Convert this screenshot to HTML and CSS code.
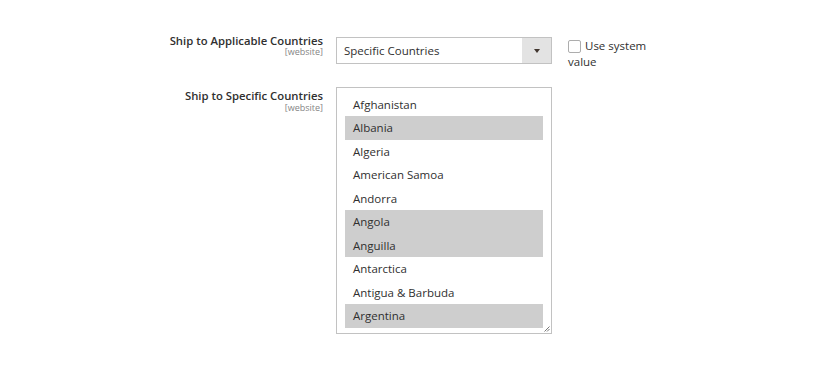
FILE: index.html
```html
<!DOCTYPE html>
<html>
<head>
<meta charset="utf-8">
<link rel="stylesheet" href="styles.css">
</head>
<body>
<div class="form">
  <div class="row row-first">
    <div class="label">
      <span class="label-text">Ship to Applicable Countries</span>
      <span class="scope">[website]</span>
    </div>
    <div class="control">
      <div class="select">
        <span class="select-value">Specific Countries</span>
        <span class="select-arrow"><span class="tri"></span></span>
      </div>
    </div>
    <div class="use-default">
      <span class="checkbox"></span>Use system value
    </div>
  </div>
  <div class="row row-second">
    <div class="label label-second">
      <span class="label-text">Ship to Specific Countries</span>
      <span class="scope">[website]</span>
    </div>
    <div class="control">
      <div class="multiselect">
        <div class="option">Afghanistan</div>
        <div class="option selected">Albania</div>
        <div class="option">Algeria</div>
        <div class="option">American Samoa</div>
        <div class="option">Andorra</div>
        <div class="option selected">Angola</div>
        <div class="option selected">Anguilla</div>
        <div class="option">Antarctica</div>
        <div class="option">Antigua &amp; Barbuda</div>
        <div class="option selected">Argentina</div>
        <svg class="grip" width="6" height="6" viewBox="0 0 6 6"><path d="M5.5 0.5 L0.5 5.5 M5.5 3 L3 5.5" stroke="#777" stroke-width="1" fill="none"/></svg>
      </div>
    </div>
  </div>
</div>
</body>
</html>
```
FILE: styles.css
```css
html, body {
  margin: 0;
  padding: 0;
  background: #ffffff;
}
body {
  font-family: "Open Sans", "Liberation Sans", sans-serif;
  color: #303030;
  width: 837px;
  height: 366px;
  overflow: hidden;
}
.form {
  padding-top: 34px;
}
.row {
  display: flex;
  align-items: flex-start;
}
.row-second {
  margin-top: 17px;
}
.label {
  width: 323px;
  text-align: right;
  display: flex;
  flex-direction: column;
  align-items: flex-end;
}
.label-second {
  margin-top: 2px;
}
.label-second .scope {
  margin-top: 1px;
}
.label-text {
  font-size: 11.3px;
  font-weight: 600;
  line-height: 13px;
}
.scope {
  font-size: 9px;
  line-height: 10px;
  color: #858585;
}
.control {
  margin-left: 13px;
  width: 216px;
}
.row-first .control {
  margin-top: 3px;
}
.select {
  box-sizing: border-box;
  height: 27px;
  border: 1px solid #c2c2c2;
  display: flex;
  align-items: stretch;
  background: #fff;
}
.select-value {
  flex: 1;
  padding-left: 7px;
  font-size: 11.5px;
  line-height: 25px;
  color: #303030;
}
.select-arrow {
  width: 29px;
  background: #e3e3e3;
  display: flex;
  align-items: center;
  justify-content: center;
}
.tri {
  width: 0;
  height: 0;
  border-left: 3.5px solid transparent;
  border-right: 3.5px solid transparent;
  border-top: 4px solid #41362f;
  margin-left: 1px;
}
.use-default {
  margin-left: 16px;
  margin-top: 4px;
  width: 100px;
  font-size: 11.5px;
  line-height: 16px;
  color: #303030;
}
.checkbox {
  display: inline-block;
  box-sizing: border-box;
  width: 13px;
  height: 13px;
  border: 1px solid #adadad;
  border-radius: 2px;
  background: #fff;
  vertical-align: -3px;
  margin-right: 4px;
}
.multiselect {
  position: relative;
  box-sizing: border-box;
  height: 247px;
  border: 1px solid #c2c2c2;
  padding: 4.5px 8px 5px 8px;
  background: #fff;
}
.option {
  height: 23.5px;
  line-height: 23.5px;
  padding-left: 8px;
  font-size: 11.5px;
  color: #303030;
  white-space: nowrap;
}
.option.selected {
  background: #cecece;
}
.grip {
  position: absolute;
  right: 1px;
  bottom: 1px;
}
```
